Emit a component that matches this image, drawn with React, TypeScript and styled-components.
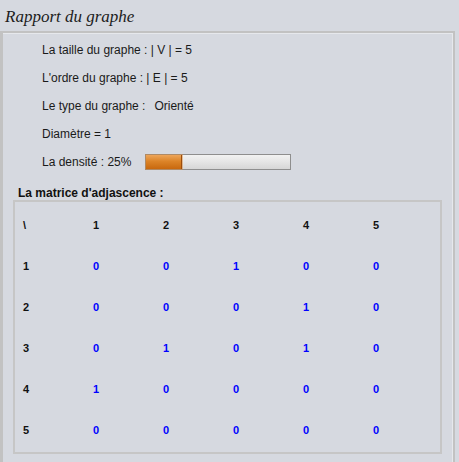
import React from "react"
import styled, { createGlobalStyle } from "styled-components"

const GlobalStyle = createGlobalStyle`
  html, body {
    margin: 0;
    padding: 0;
    background: #d6d9e0;
  }
  body {
    font-family: "Liberation Sans", Arial, sans-serif;
  }
`

const matrix = [
  [0, 0, 1, 0, 0],
  [0, 0, 0, 1, 0],
  [0, 1, 0, 1, 0],
  [1, 0, 0, 0, 0],
  [0, 0, 0, 0, 0],
]

const density = 25

const App = () => {
  return (
    <Page>
      <GlobalStyle />
      <Header>
        <Title>Rapport du graphe</Title>
      </Header>
      <Panel>
        <InfoList>
          <InfoRow>La taille du graphe : | V | = 5</InfoRow>
          <InfoRow>L'ordre du graphe : | E | = 5</InfoRow>
          <InfoRow>
            Le type du graphe :<Value>Orienté</Value>
          </InfoRow>
          <InfoRow>Diamètre = 1</InfoRow>
          <InfoRow>
            La densité : {density}%
            <Progress>
              <ProgressFill style={{ width: `${density}%` }} />
            </Progress>
          </InfoRow>
        </InfoList>
        <SectionTitle>La matrice d'adjascence :</SectionTitle>
        <MatrixBox>
          <Cell $head>\</Cell>
          {[1, 2, 3, 4, 5].map((n) => (
            <Cell key={"h" + n} $head>
              {n}
            </Cell>
          ))}
          {matrix.map((row, i) => (
            <React.Fragment key={i}>
              <Cell $head>{i + 1}</Cell>
              {row.map((v, j) => (
                <Cell key={j}>{v}</Cell>
              ))}
            </React.Fragment>
          ))}
        </MatrixBox>
      </Panel>
    </Page>
  )
}

export default App

const Page = styled.div`
  width: 459px;
  height: 462px;
  display: flex;
  flex-direction: column;
  overflow: hidden;
`

const Header = styled.div`
  height: 31px;
  display: flex;
  align-items: center;
  padding-left: 5px;
  box-sizing: border-box;
`

const Title = styled.span`
  font-family: "Liberation Serif", "DejaVu Serif", serif;
  font-style: italic;
  font-size: 17px;
  color: #1c1c1c;
  margin-top: 3px;
`

const Panel = styled.div`
  flex: 1;
  margin-right: 4px;
  border-top: 2px solid #c2c2c2;
  border-left: 3px solid #c2c2c2;
  border-right: 2px solid #c2c2c2;
  box-shadow: inset -1px 1px 0 #e6e8ec;
  display: flex;
  flex-direction: column;
`

const InfoList = styled.div`
  display: flex;
  flex-direction: column;
  padding: 3px 0 0 39px;
`

const InfoRow = styled.div`
  height: 28px;
  display: flex;
  align-items: center;
  font-size: 12px;
  color: #1a1a1a;
`

const Value = styled.span`
  margin-left: 9px;
`

const Progress = styled.div`
  width: 144px;
  height: 14px;
  margin-left: 14px;
  border: 1px solid #8e8e8e;
  background: linear-gradient(#f2f2f2, #e6e6e6 45%, #d6d6d6);
  display: flex;
`

const ProgressFill = styled.div`
  height: 100%;
  box-sizing: border-box;
  border-right: 1px solid #9c4d0c;
  background: linear-gradient(#eda55a, #dc8428 45%, #c8680e);
  box-shadow: 0 0 0 1px rgba(214, 132, 50, 0.45);
`

const SectionTitle = styled.div`
  margin: 10px 0 0 15px;
  height: 14px;
  line-height: 14px;
  font-size: 12px;
  font-weight: bold;
  color: #111;
`

const MatrixBox = styled.div`
  margin-left: 10px;
  width: 429px;
  height: 254px;
  box-sizing: border-box;
  border: 2px solid #c6c6c6;
  padding: 2px 0 0 8px;
  display: grid;
  grid-template-columns: repeat(6, 70px);
  grid-auto-rows: 41px;
  align-content: start;
`

const Cell = styled.div<{ $head?: boolean }>`
  display: flex;
  align-items: center;
  font-size: 11px;
  font-weight: bold;
  color: ${(p) => (p.$head ? "#111" : "#0000ff")};
`
